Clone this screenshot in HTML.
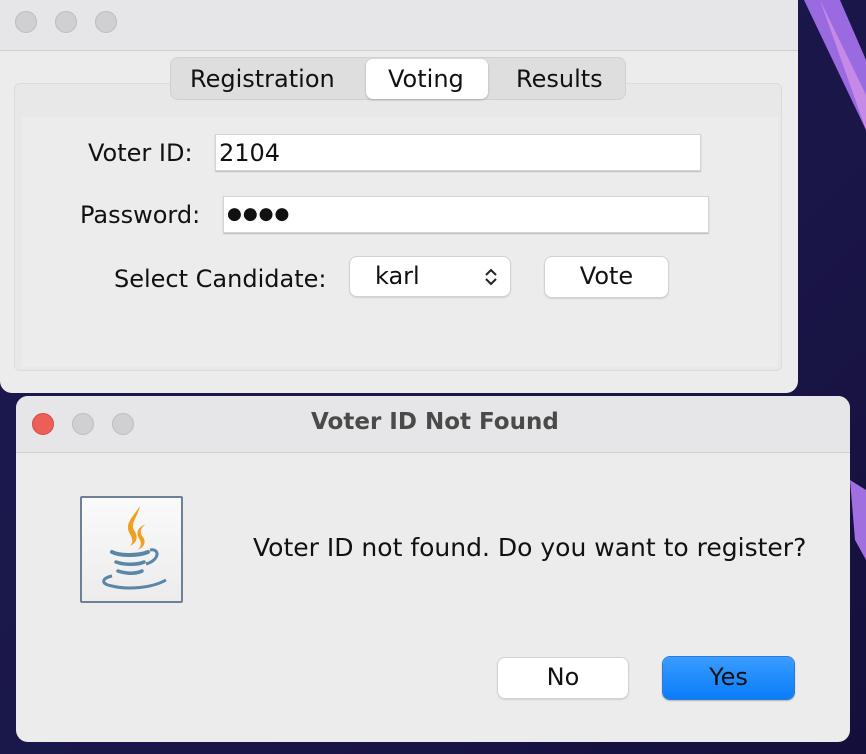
<!DOCTYPE html>
<html><head><meta charset="utf-8"><style>
*{box-sizing:border-box;margin:0;padding:0}
body{width:866px;height:754px;overflow:hidden;position:relative;font-family:"DejaVu Sans","Liberation Sans",sans-serif;
background:linear-gradient(135deg,#1c1a52 0%,#1a1648 60%,#140f3a 100%);}
.abs{position:absolute}
.dot{position:absolute;width:22px;height:22px;border-radius:50%;background:#d0cfd2;border:1px solid #bdbcbf}
.win{left:0;top:0;width:798px;height:393px;background:#ececec;border-radius:0 0 12px 12px;overflow:hidden}
.title{left:0;top:0;width:798px;height:51px;background:#e6e5e7;border-bottom:1px solid #cfcfcf}
.panel{left:14px;top:83px;width:768px;height:288px;border:1px solid #dcdcdc;border-radius:6px;background:#e8e8e8}
.inner{left:22px;top:117px;width:756px;height:250px;background:#ececec}
.tabs{left:170px;top:57px;width:456px;height:43px;background:#dededf;border:1px solid #d0d0d0;border-radius:8px}
.lbl{font-size:24px;color:#111;position:absolute;white-space:nowrap}
.field{position:absolute;background:#fff;border:1px solid #d4d4d4;box-shadow:0 1px 1px #bbb}
.btn{position:absolute;background:#fff;border-radius:7px;box-shadow:0 0 0 1px #d2d2d2,0 1px 2px #aaa;font-size:24px;text-align:center;color:#111}
.dlg{left:16px;top:396px;width:834px;height:346px;background:#ececec;border-radius:12px;overflow:hidden}
</style></head><body>
<svg class="abs" style="left:780px;top:0" width="86" height="754"><polygon points="24,0 60,0 86,60 86,130" fill="#9a6ae0"/><polygon points="40,0 86,95 86,130" fill="#c58ae8"/><polygon points="70,480 86,490 86,560 75,540" fill="#a070e0"/></svg>
<div class="abs win">
 <div class="abs title"></div>
 <div class="dot" style="left:15px;top:11px"></div>
 <div class="dot" style="left:55px;top:11px"></div>
 <div class="dot" style="left:95px;top:11px"></div>
 <div class="abs panel"></div>
 <div class="abs inner"></div>
 <div class="abs tabs"></div>
 <div class="abs" style="left:366px;top:59px;width:122px;height:40px;background:#fff;border-radius:7px;box-shadow:0 1px 2px #aaa"></div>
 <div class="lbl" style="left:190px;top:65px">Registration</div>
 <div class="lbl" style="left:388px;top:65px">Voting</div>
 <div class="lbl" style="left:516px;top:65px">Results</div>
 <div class="lbl" style="left:88px;top:139px">Voter ID:</div>
 <div class="field" style="left:215px;top:134px;width:486px;height:37px"></div>
 <div class="lbl" style="left:219px;top:139px">2104</div>
 <div class="lbl" style="left:80px;top:201px">Password:</div>
 <div class="field" style="left:223px;top:196px;width:486px;height:37px"></div>
 <div class="lbl" style="left:227px;top:204px;font-size:17px;letter-spacing:1px">●●●●</div>
 <div class="lbl" style="left:114px;top:265px">Select Candidate:</div>
 <div class="btn" style="left:350px;top:257px;width:160px;height:39px;text-align:left;padding-left:25px;line-height:38px">karl<svg style="position:absolute;right:12px;top:10px" width="14" height="20"><path d="M2 8 L7 3 L12 8 M2 12 L7 17 L12 12" stroke="#222" stroke-width="2" fill="none"/></svg></div>
 <div class="btn" style="left:545px;top:257px;width:123px;height:40px;line-height:39px">Vote</div>
</div>
<div class="abs dlg">
 <div class="abs" style="left:0;top:0;width:834px;height:57px;background:#e6e5e7;border-bottom:1px solid #cfcfcf"></div>
 <div class="dot" style="left:16px;top:17px;background:#ec5f57;border-color:#d24b44"></div>
 <div class="dot" style="left:56px;top:17px"></div>
 <div class="dot" style="left:96px;top:17px"></div>
 <div class="lbl" style="left:295px;top:13px;font-weight:bold;color:#4a4a4a;font-size:23px">Voter ID Not Found</div>
 <div class="abs" style="left:64px;top:100px;width:103px;height:107px;border:2px solid #6d8096;border-radius:2px;background:linear-gradient(#fafafa,#ececec)">
  <svg width="99" height="103" viewBox="0 0 99 103">
   <path d="M58 8 C50 20 42 26 48 36 C50 40 52 44 48 48 C56 44 56 38 52 32 C48 26 56 18 58 8Z" fill="#f0a020"/>
   <path d="M64 26 C54 30 54 36 58 42 C60 46 58 50 56 52 C64 48 64 42 60 38 C58 34 58 30 64 26Z" fill="#f0a020"/>
   <path d="M30 54 C38 58 56 58 66 54" stroke="#5a86a8" stroke-width="4" fill="none" stroke-linecap="round"/>
   <path d="M68 52 C78 50 78 62 64 66" stroke="#5a86a8" stroke-width="3" fill="none"/>
   <path d="M34 64 C42 67 56 67 62 64" stroke="#5a86a8" stroke-width="3.5" fill="none" stroke-linecap="round"/>
   <path d="M36 73 C44 76 54 76 60 73" stroke="#5a86a8" stroke-width="3.5" fill="none" stroke-linecap="round"/>
   <path d="M30 78 C20 80 18 86 30 88 C46 92 70 90 84 82" stroke="#5a86a8" stroke-width="3" fill="none"/>
  </svg>
 </div>
 <div class="lbl" style="left:237px;top:137px;font-size:25px">Voter ID not found. Do you want to register?</div>
 <div class="btn" style="left:482px;top:262px;width:130px;height:40px;line-height:39px">No</div>
 <div class="btn" style="left:647px;top:261px;width:131px;height:42px;line-height:40px;background:linear-gradient(#3a9cff,#0a7cf8);box-shadow:0 0 0 1px #2a7bd8,0 1px 2px #666">Yes</div>
</div>
</body></html>
